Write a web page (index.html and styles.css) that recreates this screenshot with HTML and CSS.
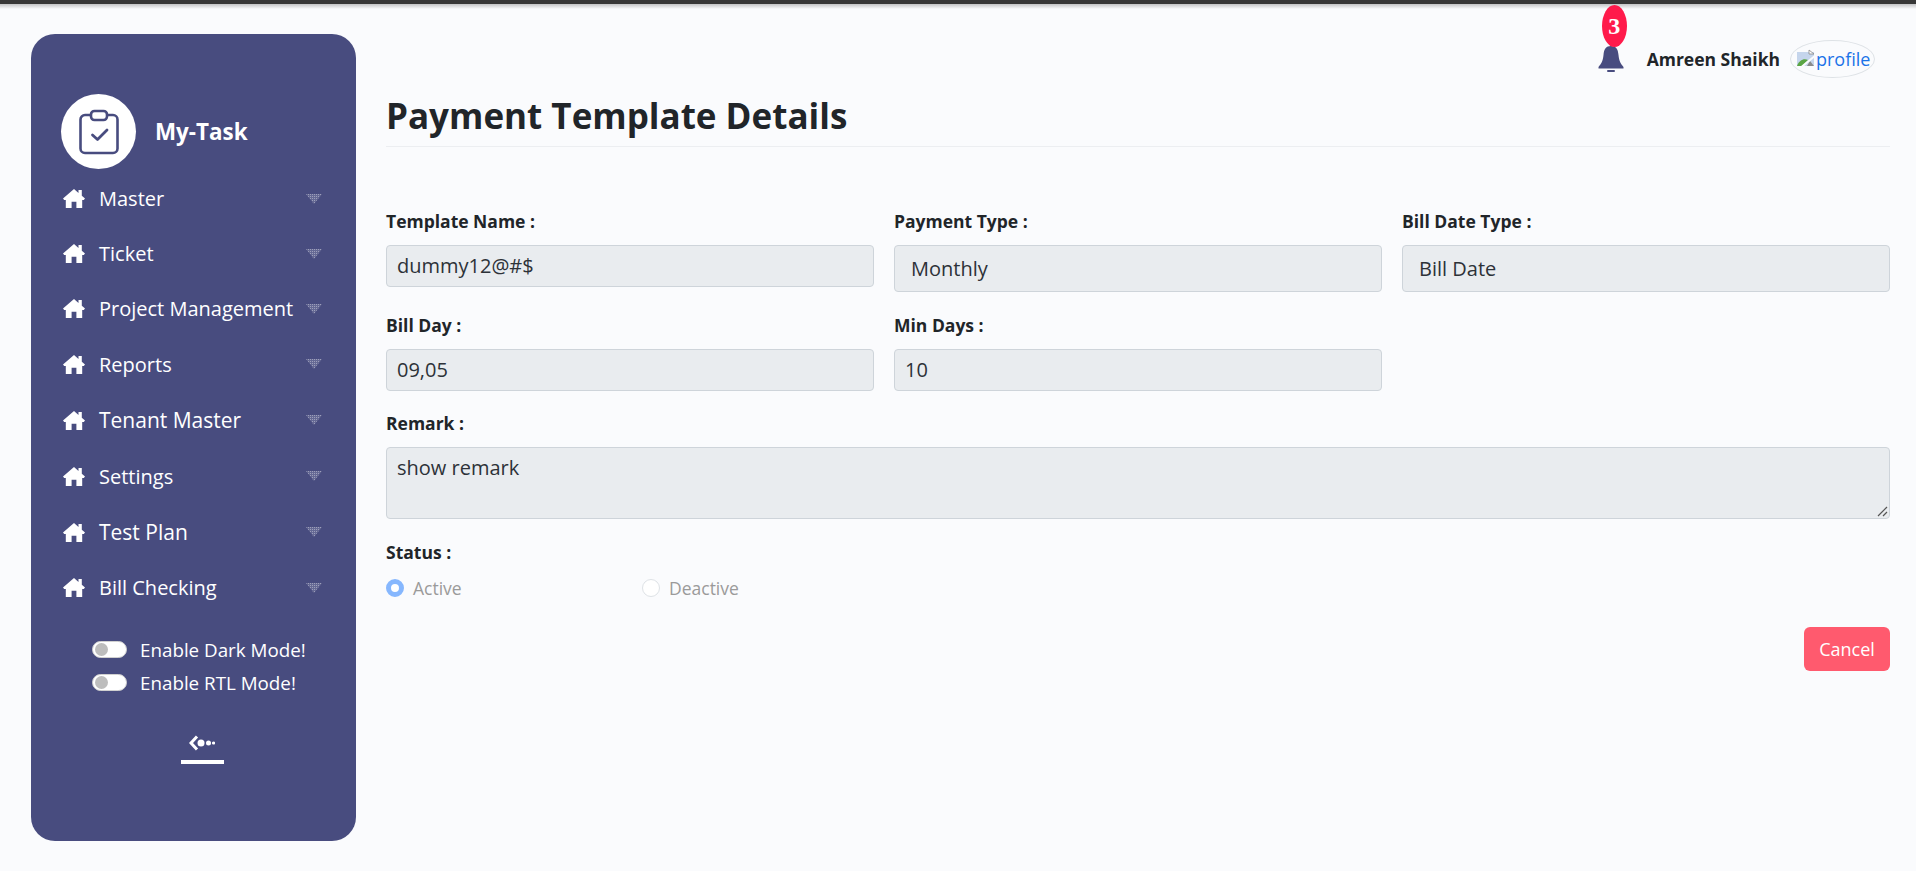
FILE: index.html
```html
<!DOCTYPE html>
<html lang="en">
<head>
<meta charset="utf-8">
<title>Payment Template Details</title>
<link rel="stylesheet" href="styles.css">
</head>
<body>
<svg class="sprites" width="0" height="0">
  <defs>
    <pattern id="stripes" width="2" height="2" patternUnits="userSpaceOnUse">
      <rect width="2" height="2" fill="#fff" fill-opacity=".16"/>
      <rect width="1" height="1" fill="#fff" fill-opacity=".36"/>
    </pattern>
  </defs>
  <symbol id="house" viewBox="0 0 22 19"><path d="M11 0L15.500 3.900V1H18.800V6.700L22 9.500L20.800 11H19.200V19H13.400V12.800H8.600V19H2.800V11H1.200L0 9.500Z"/></symbol>
  <symbol id="drop" viewBox="0 0 16 10"><path d="M0 0H16L8 10Z" fill="url(#stripes)"/></symbol>
</svg>
<div class="layout">
  <aside class="sidebar">
    <div class="brand">
      <span class="brand-circle">
        <svg width="40" height="46" viewBox="0 0 40 46" fill="none" stroke="#484c7f" stroke-width="2.600" stroke-linejoin="round" stroke-linecap="round"><path d="M11 6H6a4.500 4.500 0 0 0-4.500 4.500v29a4.500 4.500 0 0 0 4.500 4.500h28a4.500 4.500 0 0 0 4.500-4.500v-29a4.500 4.500 0 0 0-4.500-4.500h-5"/><rect x="12" y="2" width="16" height="9" rx="3.500"/><path d="M13.500 26l5 4.500 9.500-9.500" stroke-width="2.800"/></svg>
      </span>
      <span class="brand-name">My-Task</span>
    </div>
    <nav class="menu">
      <a class="menu-item"><svg class="house"><use href="#house"/></svg><span class="menu-text">Master</span><svg class="drop"><use href="#drop"/></svg></a>
      <a class="menu-item"><svg class="house"><use href="#house"/></svg><span class="menu-text">Ticket</span><svg class="drop"><use href="#drop"/></svg></a>
      <a class="menu-item"><svg class="house"><use href="#house"/></svg><span class="menu-text">Project Management</span><svg class="drop"><use href="#drop"/></svg></a>
      <a class="menu-item menu-item-tall"><svg class="house"><use href="#house"/></svg><span class="menu-text">Reports</span><svg class="drop"><use href="#drop"/></svg></a>
      <a class="menu-item menu-item-tall"><svg class="house"><use href="#house"/></svg><span class="menu-text menu-text-lg">Tenant Master</span><svg class="drop"><use href="#drop"/></svg></a>
      <a class="menu-item menu-item-tall"><svg class="house"><use href="#house"/></svg><span class="menu-text">Settings</span><svg class="drop"><use href="#drop"/></svg></a>
      <a class="menu-item menu-item-tall"><svg class="house"><use href="#house"/></svg><span class="menu-text menu-text-lg">Test Plan</span><svg class="drop"><use href="#drop"/></svg></a>
      <a class="menu-item"><svg class="house"><use href="#house"/></svg><span class="menu-text">Bill Checking</span><svg class="drop"><use href="#drop"/></svg></a>
    </nav>
    <div class="toggles">
      <div class="toggle-row"><span class="switch"></span><span>Enable Dark Mode!</span></div>
      <div class="toggle-row"><span class="switch"></span><span>Enable RTL Mode!</span></div>
    </div>
    <div class="collapse">
      <svg width="26" height="20" viewBox="0 0 26 20" fill="#fff"><path d="M8 3.500L2 10L8 16.500" fill="none" stroke="#fff" stroke-width="3"/><circle cx="12" cy="10" r="3.500"/><circle cx="19.500" cy="10" r="2.500"/><circle cx="24.500" cy="10" r="1.600"/></svg>
      <span class="collapse-bar"></span>
    </div>
  </aside>
  <main class="main">
    <header class="topbar">
      <div class="bell">
        <svg width="26" height="26" viewBox="0 0 26 26" fill="#484c7f"><path d="M13 0C18 0 20 3 20.500 9C21 15 23 18 25.500 21V22.500H.5V21C3 18 5 15 5.500 9C6 3 8 0 13 0Z"/><rect x="9" y="24" width="8" height="2" rx="1"/></svg>
        <span class="bell-badge">3</span>
      </div>
      <span class="user-name">Amreen Shaikh</span>
      <a class="avatar">
        <svg class="broken" width="20" height="20" viewBox="0 0 20 20"><path d="M1 3h12l5 0v14H1z" fill="#c5d5ec"/><path d="M13 1l5 4h-5z" fill="#fff" stroke="#888" stroke-width=".8"/><path d="M1 17c2-6 7-8 11-6l-6 6z" fill="#5aa544"/><path d="M14 12l4 5h-7z" fill="#8a8a8a"/><path d="M3 20L20 6" stroke="#fafbfd" stroke-width="2"/></svg>profile
      </a>
    </header>
    <h1 class="page-title">Payment Template Details</h1>
    <form class="form">
      <div class="field"><label class="label">Template Name :</label><div class="control">dummy12@#$</div></div>
      <div class="field"><label class="label">Payment Type :</label><div class="control control-select">Monthly</div></div>
      <div class="field"><label class="label">Bill Date Type :</label><div class="control control-select">Bill Date</div></div>
      <div class="field field-row2"><label class="label">Bill Day :</label><div class="control">09,05</div></div>
      <div class="field field-row2"><label class="label">Min Days :</label><div class="control">10</div></div>
      <div class="field field-full"><label class="label">Remark :</label>
        <div class="control control-area">show remark
          <svg class="grip" width="11" height="11" viewBox="0 0 11 11" stroke="#555" stroke-width="1.200"><path d="M1 10L10 1M6 10L10 6"/></svg>
        </div>
      </div>
      <div class="field field-full"><label class="label">Status :</label>
        <div class="radios">
          <span class="radio-item"><span class="radio radio-on"></span>Active</span>
          <span class="radio-item"><span class="radio"></span>Deactive</span>
        </div>
      </div>
    </form>
    <div class="actions"><button class="btn-cancel" type="button">Cancel</button></div>
  </main>
</div>
</body>
</html>
```
FILE: styles.css
```css
* { box-sizing: border-box; }
html, body { margin: 0; height: 871px; overflow: hidden; }
body {
  background: #fafbfd;
  font-family: "Open Sans", sans-serif;
  color: #212529;
  border-top: 4px solid #383838;
  position: relative;
}
body::before {
  content: "";
  position: absolute;
  left: 0; right: 0; top: 0;
  height: 5px;
  background: linear-gradient(rgba(0,0,0,.22), rgba(0,0,0,0));
}
.sprites { position: absolute; }
.layout { display: flex; padding: 30px 26px 0 31px; }
.sidebar {
  width: 325px;
  height: 807px;
  flex: none;
  background: #484c7f;
  border-radius: 24px;
  color: #fff;
  padding: 60px 0 0 30px;
}
.brand { display: flex; align-items: center; gap: 19px; }
.brand-circle {
  width: 75px; height: 75px;
  border-radius: 50%;
  background: #fff;
  display: flex; align-items: center; justify-content: center;
}
.brand-name { font-size: 22.4px; font-weight: 700; }
.menu { margin-top: 2px; }
.menu-item {
  display: flex;
  align-items: center;
  height: 55px;
  padding-right: 34px;
}
.menu-item-tall { height: 56px; }
.house { width: 22px; height: 19px; fill: #fff; margin: 0 14px 0 2px; flex: none; }
.menu-text { flex: 1; font-size: 20px; white-space: nowrap; }
.menu-text-lg { font-size: 21px; }
.drop { width: 16px; height: 10px; flex: none; }
.toggles { margin: 18px 0 0 31px; font-size: 18.8px; }
.toggle-row { display: flex; align-items: center; gap: 13px; height: 33px; }
.switch {
  width: 35px; height: 17px;
  border-radius: 9px;
  background: #fff;
  border: 1px solid #d0d0d0;
  position: relative;
  flex: none;
}
.switch::after {
  content: "";
  position: absolute;
  left: 2px; top: 1px;
  width: 13px; height: 13px;
  border-radius: 50%;
  background: #bdbdbd;
}
.collapse {
  margin: 34px 0 0 0;
  display: flex;
  flex-direction: column;
  align-items: center;
  width: 282px;
  gap: 7px;
}
.collapse-bar { width: 43px; height: 4px; background: #fff; }
.main { flex: 1; margin-left: 30px; min-width: 0; }
.topbar {
  display: flex;
  align-items: center;
  justify-content: flex-end;
  height: 38px;
  margin-top: 6px;
  padding-right: 15px;
}
.bell { position: relative; width: 26px; height: 26px; margin-right: 23px; }
.bell svg { display: block; }
.bell-badge {
  position: absolute;
  left: 4px; top: -41px;
  width: 25px; height: 42px;
  border-radius: 50%;
  background: #ff1a4b;
  color: #fff;
  font: 700 24px/42px "Liberation Serif", serif;
  text-align: center;
}
.user-name { font-size: 17.5px; font-weight: 700; margin-right: 10px; white-space: nowrap; }
.avatar {
  width: 85px; height: 38px;
  border: 1px solid #dee2e6;
  border-radius: 50%;
  color: #1a73e8;
  font-size: 18px;
  display: flex; align-items: center; padding-left: 5px;
  white-space: nowrap;
}
.broken { flex: none; }
.page-title {
  margin: 0;
  font-size: 35px;
  font-weight: 700;
  line-height: 48px;
  height: 69px;
  padding-top: 14px;
  border-bottom: 1px solid #eceef1;
}
.form {
  display: grid;
  grid-template-columns: repeat(3, 1fr);
  column-gap: 20px;
  margin-top: 63px;
}
.field { margin-bottom: 22px; }
.field-row2 { margin-bottom: 21px; }
.field-full { grid-column: 1 / -1; }
.label { display: block; font-size: 17.5px; font-weight: 700; line-height: 22px; margin-bottom: 13px; }
.control {
  height: 42px;
  background: #e9ecef;
  border: 1px solid #ced4da;
  border-radius: 4px;
  font-size: 20px;
  line-height: 40px;
  padding: 0 10px;
  color: #2d3238;
}
.control-select { height: 47px; line-height: 45px; padding: 0 16px; }
.control-area { height: 72px; line-height: 27px; padding: 6px 10px; position: relative; }
.grip { position: absolute; right: 1px; bottom: 1px; }
.radios { display: flex; font-size: 17.5px; color: #9a9a9a; height: 24px; }
.radio-item { display: flex; align-items: center; gap: 9px; width: 256px; }
.radio { width: 18px; height: 18px; border-radius: 50%; border: 1px solid #dee2e6; background: #fff; flex: none; }
.radio-on { border: 5px solid #86b7fe; }
.actions { display: flex; justify-content: flex-end; margin-top: 5px; }
.btn-cancel {
  width: 86px; height: 44px;
  background: #ff5a6e;
  border: 0;
  border-radius: 6px;
  color: #fff;
  font: 400 18px "Open Sans", sans-serif;
}
```
